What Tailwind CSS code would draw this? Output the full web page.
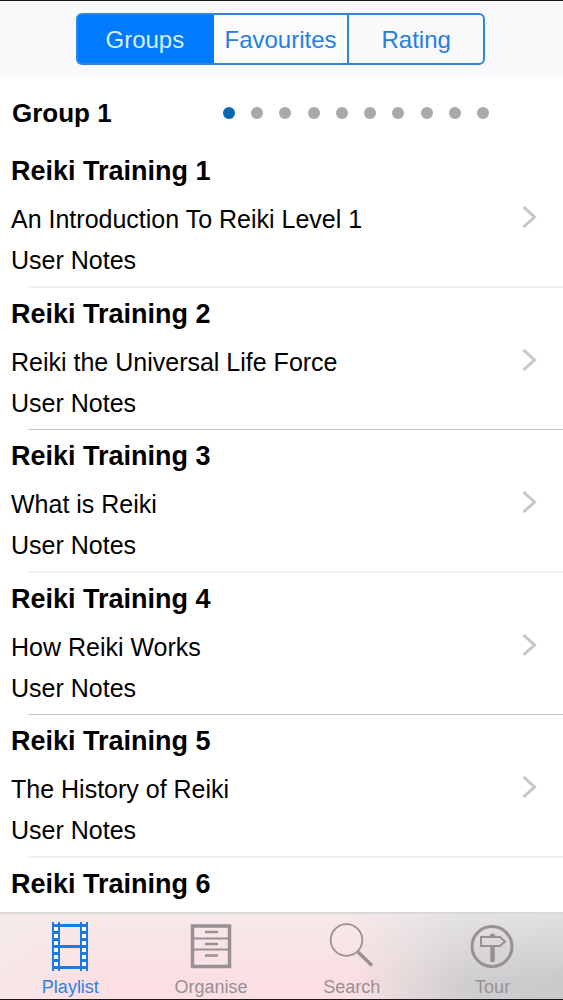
<!DOCTYPE html>
<html lang="en">
<head>
    <meta charset="UTF-8">
    <meta name="viewport" content="width=device-width, initial-scale=1.0">
    <title>Playlist</title>
    <script src="https://cdn.jsdelivr.net/npm/@tailwindcss/browser@4"></script>
</head>
<body class="h-screen flex flex-col overflow-hidden bg-white text-black border-y border-[#1c161c] font-['Liberation_Sans',Arial,sans-serif]">
    <header class="shrink-0 bg-[#f9f8fa] pl-[76px] pr-[78px] py-3">
        <div class="flex h-[52px] overflow-hidden rounded-md border-2 border-[#2f86dc] bg-[#007aff] text-2xl text-[#2380e2]">
            <button type="button" aria-pressed="true" class="flex-1 bg-[#007aff] pt-0.5 pr-0.5 text-[#d8f0ff]">Groups</button>
            <button type="button" class="flex-1 border-r-2 border-[#2f86dc] bg-[#fcfcfe] pt-0.5">Favourites</button>
            <button type="button" class="flex-1 bg-[#f9f8fa] pt-0.5">Rating</button>
        </div>
    </header>

    <main class="min-h-0 flex-1 overflow-hidden">
        <div class="flex h-[68px] items-start justify-between pl-3 pr-[74px] pt-5">
            <h1 class="text-[26px] leading-8 font-bold">Group 1</h1>
            <div class="flex h-8 w-[266px] items-center justify-between">
                <span class="size-3 rounded-full bg-[#0868b4]"></span>
                <span class="size-3 rounded-full bg-[#aaa8aa]"></span>
                <span class="size-3 rounded-full bg-[#aaa8aa]"></span>
                <span class="size-3 rounded-full bg-[#aaa8aa]"></span>
                <span class="size-3 rounded-full bg-[#aaa8aa]"></span>
                <span class="size-3 rounded-full bg-[#aaa8aa]"></span>
                <span class="size-3 rounded-full bg-[#aaa8aa]"></span>
                <span class="size-3 rounded-full bg-[#aaa8aa]"></span>
                <span class="size-3 rounded-full bg-[#aaa8aa]"></span>
                <span class="size-3 rounded-full bg-[#aaa8aa]"></span>
            </div>
        </div>

        <ul>
            <li>
                <a href="#" class="flex items-center justify-between pl-[11px] pr-[26px] pt-[10px] pb-[5px]">
                    <div>
                        <h2 class="mb-3 text-[27px] leading-8 font-bold">Reiki Training 1</h2>
                        <p class="text-[25px] leading-[41px]">An Introduction To Reiki Level 1</p>
                        <p class="text-[25px] leading-[41px]">User Notes</p>
                    </div>
                    <svg class="h-6 w-4" viewBox="0 1 16 24" fill="none" stroke="#c6c6c8" stroke-width="3"><path d="M2.500 2l11 10L2.500 22"/></svg>
                </a>
                <div class="ml-7 h-0.5 bg-[#efeff1]"></div>
            </li>
            <li>
                <a href="#" class="flex items-center justify-between pl-[11px] pr-[26px] pt-[10px] pb-[5px]">
                    <div>
                        <h2 class="mb-3 text-[27px] leading-8 font-bold">Reiki Training 2</h2>
                        <p class="text-[25px] leading-[41px]">Reiki the Universal Life Force</p>
                        <p class="text-[25px] leading-[41px]">User Notes</p>
                    </div>
                    <svg class="h-6 w-4" viewBox="0 1 16 24" fill="none" stroke="#c6c6c8" stroke-width="3"><path d="M2.500 2l11 10L2.500 22"/></svg>
                </a>
                <div class="ml-7 h-px bg-[#c4c4c6]"></div>
            </li>
            <li>
                <a href="#" class="flex items-center justify-between pl-[11px] pr-[26px] pt-[10px] pb-[5px]">
                    <div>
                        <h2 class="mb-3 text-[27px] leading-8 font-bold">Reiki Training 3</h2>
                        <p class="text-[25px] leading-[41px]">What is Reiki</p>
                        <p class="text-[25px] leading-[41px]">User Notes</p>
                    </div>
                    <svg class="h-6 w-4" viewBox="0 1 16 24" fill="none" stroke="#c6c6c8" stroke-width="3"><path d="M2.500 2l11 10L2.500 22"/></svg>
                </a>
                <div class="ml-7 h-0.5 bg-[#efeff1]"></div>
            </li>
            <li>
                <a href="#" class="flex items-center justify-between pl-[11px] pr-[26px] pt-[10px] pb-[5px]">
                    <div>
                        <h2 class="mb-3 text-[27px] leading-8 font-bold">Reiki Training 4</h2>
                        <p class="text-[25px] leading-[41px]">How Reiki Works</p>
                        <p class="text-[25px] leading-[41px]">User Notes</p>
                    </div>
                    <svg class="h-6 w-4" viewBox="0 1 16 24" fill="none" stroke="#c6c6c8" stroke-width="3"><path d="M2.500 2l11 10L2.500 22"/></svg>
                </a>
                <div class="ml-7 h-px bg-[#c4c4c6]"></div>
            </li>
            <li>
                <a href="#" class="flex items-center justify-between pl-[11px] pr-[26px] pt-[10px] pb-[5px]">
                    <div>
                        <h2 class="mb-3 text-[27px] leading-8 font-bold">Reiki Training 5</h2>
                        <p class="text-[25px] leading-[41px]">The History of Reiki</p>
                        <p class="text-[25px] leading-[41px]">User Notes</p>
                    </div>
                    <svg class="h-6 w-4" viewBox="0 1 16 24" fill="none" stroke="#c6c6c8" stroke-width="3"><path d="M2.500 2l11 10L2.500 22"/></svg>
                </a>
                <div class="ml-7 h-0.5 bg-[#efeff1]"></div>
            </li>
            <li>
                <a href="#" class="block pl-[11px] pt-[10px]">
                    <h2 class="text-[27px] leading-8 font-bold">Reiki Training 6</h2>
                </a>
            </li>
        </ul>
    </main>

    <nav class="shrink-0 border-t-2 border-[#d9d7d8] bg-[linear-gradient(90deg,#f8e6e7_0%,#fbdfe3_15%,#fbdfe3_62%,#e3d8d9_73%,#d0ced1_82%,#c9c9cc_100%)]">
        <div class="grid grid-cols-4 bg-linear-to-b from-[#f2efee]/60 to-transparent to-80% pt-2 text-lg leading-6 text-[#979193]">
            <a href="#" class="flex flex-col items-center gap-[3px] text-[#2f80e4]">
                <svg class="size-[50px]" viewBox="0 0 50 50">
                    <path fill="#fff" d="M8 2h7v46H8zM35 2h7v46h-7z"/>
                    <g fill="none" stroke="#1a7ae6">
                        <path stroke-width="2" d="M8 0v49M14 0v49M36 0v49M42 0v49"/>
                        <path stroke-width="3" d="M8 3.500h34M8 24.500h34M8 45.500h34M8 10.500h6M8 17.500h6M8 31.500h6M8 38.500h6M36 10.500h6M36 17.500h6M36 31.500h6M36 38.500h6"/>
                    </g>
                </svg>
                Playlist
            </a>
            <a href="#" class="flex flex-col items-center gap-[3px]">
                <svg class="size-[50px]" viewBox="0 0 50 50" fill="none" stroke="#979193">
                    <path stroke-width="3.500" d="M6.500 4h37v40.500h-37z"/>
                    <path stroke-width="2.200" d="M6 16.500h38M6 27.500h38"/>
                    <path stroke-width="2.500" d="M19 10h13M19 22h13M19 33.500h13"/>
                </svg>
                Organise
            </a>
            <a href="#" class="flex flex-col items-center gap-[3px]">
                <svg class="size-[50px]" viewBox="0 0 50 50" fill="none" stroke="#979193">
                    <circle cx="19.500" cy="18" r="15.800" stroke-width="1.800"/>
                    <path stroke-width="3.500" d="M31 30L45 43.500"/>
                </svg>
                Search
            </a>
            <a href="#" class="flex flex-col items-center gap-[3px]">
                <svg class="size-[50px]" viewBox="0 0 50 50" fill="none" stroke="#979193">
                    <circle cx="24" cy="24.500" r="20" stroke-width="3"/>
                    <path stroke-width="2" d="M13 15h19l5 4.500-5 4.500H13z"/>
                    <path stroke-width="4.500" d="M24.500 24v16"/>
                    <path fill="#979193" stroke="none" d="M21.500 15a3 3.500 0 0 1 6 0z"/>
                </svg>
                Tour
            </a>
        </div>
    </nav>
</body>
</html>
